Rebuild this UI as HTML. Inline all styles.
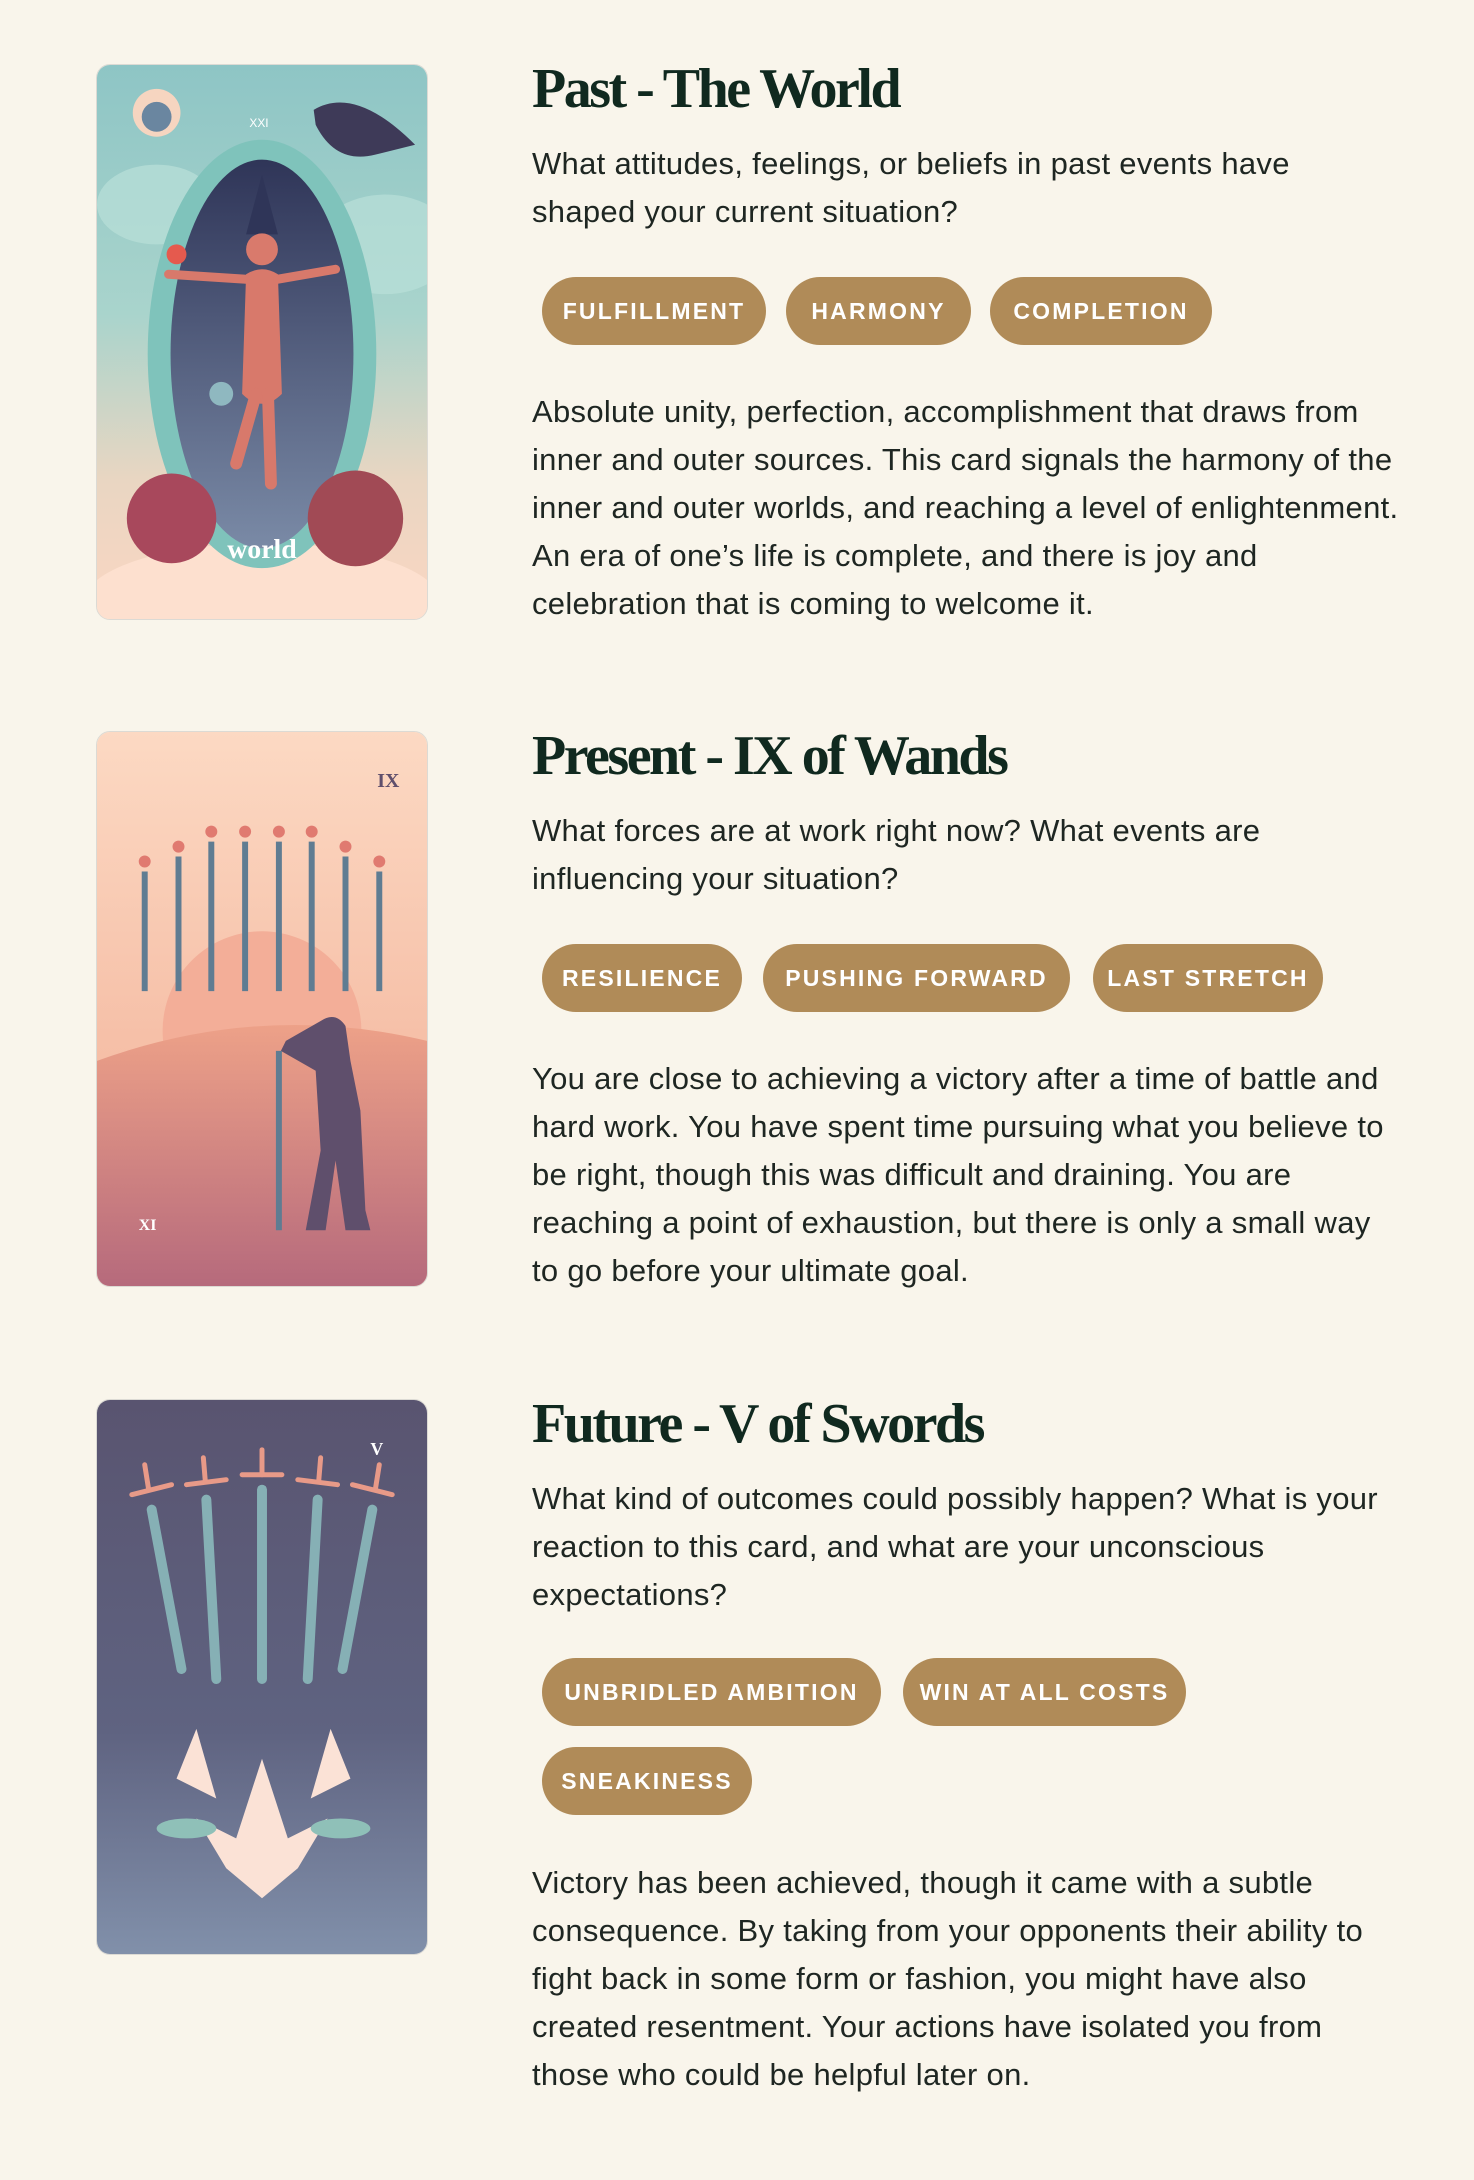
<!DOCTYPE html>
<html><head><meta charset="utf-8"><style>
*{margin:0;padding:0;box-sizing:border-box}
html,body{width:1474px;height:2180px;background:#f9f5eb;overflow:hidden}
body{position:relative;font-family:"Liberation Sans",sans-serif;color:#1e2622}
.card{position:absolute;left:96px;width:332px;height:556px;border-radius:14px;border:1.5px solid #dcdad4;overflow:hidden}
.card svg{display:block;width:100%;height:100%}
.t{position:absolute;left:532px;font-family:"Liberation Serif",serif;font-weight:bold;font-size:56px;line-height:64px;letter-spacing:-2.5px;color:#10291f;white-space:nowrap}
.p{position:absolute;left:532px;font-size:31px;letter-spacing:.3px;line-height:48px;white-space:nowrap;color:#1e2622}
.pill{position:absolute;height:68px;border-radius:34px;background:#b08b58;color:#fff;font-weight:bold;font-size:23px;letter-spacing:2.2px;display:flex;align-items:center;justify-content:center}
</style></head><body>

<!-- Section 1 -->
<div class="card" style="top:64px">
<svg viewBox="0 0 332 556" preserveAspectRatio="none">
<defs><linearGradient id="g1" x1="0" y1="0" x2="0" y2="1"><stop offset="0" stop-color="#8ec5c5"/><stop offset=".45" stop-color="#a9d4cc"/><stop offset=".75" stop-color="#e9d6c2"/><stop offset="1" stop-color="#fbd6c2"/></linearGradient>
<linearGradient id="g1b" x1="0" y1="0" x2="0" y2="1"><stop offset="0" stop-color="#2f3558"/><stop offset="1" stop-color="#7a8aa6"/></linearGradient></defs>
<rect width="332" height="556" fill="url(#g1)"/>
<ellipse cx="60" cy="140" rx="60" ry="40" fill="#b9dfd8" opacity=".7"/>
<ellipse cx="290" cy="180" rx="70" ry="50" fill="#b9dfd8" opacity=".7"/>
<ellipse cx="166" cy="540" rx="180" ry="60" fill="#fde0cf"/>
<ellipse cx="166" cy="290" rx="115" ry="215" fill="#7fc3bb"/>
<ellipse cx="166" cy="290" rx="92" ry="195" fill="url(#g1b)"/>
<path d="M166 110 L150 170 L182 170Z" fill="#2f3558"/>
<circle cx="166" cy="185" r="16" fill="#d97a6c"/>
<path d="M150 210 Q166 200 182 210 L186 330 Q166 350 146 330Z" fill="#d8796b"/>
<path d="M150 215 L72 210 M182 215 L240 205" stroke="#d8796b" stroke-width="9" stroke-linecap="round"/>
<path d="M160 330 L140 400 M172 330 L175 420" stroke="#d8796b" stroke-width="12" stroke-linecap="round"/>
<circle cx="80" cy="190" r="10" fill="#e55a4e"/>
<circle cx="125" cy="330" r="12" fill="#8fb8c0"/>
<circle cx="60" cy="48" r="24" fill="#f6d5c0"/><circle cx="60" cy="52" r="15" fill="#6a86a0"/>
<path d="M218 45 Q260 20 320 80 L280 90 Q240 100 220 60Z" fill="#3e3a58"/>
<ellipse cx="75" cy="455" rx="45" ry="45" fill="#a8485c"/>
<ellipse cx="260" cy="455" rx="48" ry="48" fill="#a14a55"/>
<text x="166" y="495" text-anchor="middle" fill="#fff" font-family="Liberation Serif,serif" font-size="28" font-weight="bold">world</text>
<text x="163" y="62" text-anchor="middle" fill="#fff" font-family="Liberation Sans,sans-serif" font-size="12">XXI</text>
</svg></div>
<div class="t" style="top:57px">Past - The World</div>
<div class="p" style="top:140px">What attitudes, feelings, or beliefs in past events have<br>shaped your current situation?</div>
<div class="pill" style="top:277px;left:542px;width:224px">FULFILLMENT</div>
<div class="pill" style="top:277px;left:786px;width:185px">HARMONY</div>
<div class="pill" style="top:277px;left:990px;width:222px">COMPLETION</div>
<div class="p" style="top:388px">Absolute unity, perfection, accomplishment that draws from<br>inner and outer sources. This card signals the harmony of the<br>inner and outer worlds, and reaching a level of enlightenment.<br>An era of one’s life is complete, and there is joy and<br>celebration that is coming to welcome it.</div>

<!-- Section 2 -->
<div class="card" style="top:731px">
<svg viewBox="0 0 332 556" preserveAspectRatio="none">
<defs><linearGradient id="g2" x1="0" y1="0" x2="0" y2="1"><stop offset="0" stop-color="#fcd9c3"/><stop offset=".55" stop-color="#f6c0a8"/><stop offset="1" stop-color="#f3b59c"/></linearGradient>
<linearGradient id="g2b" x1="0" y1="0" x2="0" y2="1"><stop offset="0" stop-color="#eda188"/><stop offset="1" stop-color="#b66a7c"/></linearGradient></defs>
<rect width="332" height="556" fill="url(#g2)"/>
<circle cx="166" cy="300" r="100" fill="#f3ae98"/>
<path d="M0 330 Q166 270 332 310 L332 556 L0 556Z" fill="url(#g2b)"/>
<g stroke="#5f7c92" stroke-width="6">
<line x1="48" y1="140" x2="48" y2="260"/><line x1="82" y1="125" x2="82" y2="260"/><line x1="115" y1="110" x2="115" y2="260"/><line x1="149" y1="110" x2="149" y2="260"/><line x1="183" y1="110" x2="183" y2="260"/><line x1="216" y1="110" x2="216" y2="260"/><line x1="250" y1="125" x2="250" y2="260"/><line x1="284" y1="140" x2="284" y2="260"/></g>
<g fill="#e07a70"><circle cx="48" cy="130" r="6"/><circle cx="82" cy="115" r="6"/><circle cx="115" cy="100" r="6"/><circle cx="149" cy="100" r="6"/><circle cx="183" cy="100" r="6"/><circle cx="216" cy="100" r="6"/><circle cx="250" cy="115" r="6"/><circle cx="284" cy="130" r="6"/></g>
<path d="M225 290 Q240 280 250 295 L255 330 L265 380 L270 480 L275 500 L250 500 L240 430 L230 500 L210 500 L225 420 L220 340 L185 320 L190 310Z" fill="#5f4f6c"/>
<line x1="183" y1="320" x2="183" y2="500" stroke="#5f7c92" stroke-width="6"/>
<text x="282" y="55" fill="#5f4f6c" font-family="Liberation Serif,serif" font-size="20" font-weight="bold">IX</text>
<text x="42" y="500" fill="#fff" font-family="Liberation Serif,serif" font-size="16" font-weight="bold">XI</text>
</svg></div>
<div class="t" style="top:724px">Present - IX of Wands</div>
<div class="p" style="top:807px">What forces are at work right now? What events are<br>influencing your situation?</div>
<div class="pill" style="top:944px;left:542px;width:200px">RESILIENCE</div>
<div class="pill" style="top:944px;left:763px;width:307px">PUSHING FORWARD</div>
<div class="pill" style="top:944px;left:1093px;width:230px">LAST STRETCH</div>
<div class="p" style="top:1055px">You are close to achieving a victory after a time of battle and<br>hard work. You have spent time pursuing what you believe to<br>be right, though this was difficult and draining. You are<br>reaching a point of exhaustion, but there is only a small way<br>to go before your ultimate goal.</div>

<!-- Section 3 -->
<div class="card" style="top:1399px">
<svg viewBox="0 0 332 556" preserveAspectRatio="none">
<defs><linearGradient id="g3" x1="0" y1="0" x2="0" y2="1"><stop offset="0" stop-color="#595470"/><stop offset=".6" stop-color="#5f6381"/><stop offset="1" stop-color="#8190aa"/></linearGradient></defs>
<rect width="332" height="556" fill="url(#g3)"/>
<g stroke="#86b0b5" stroke-width="10" stroke-linecap="round">
<line x1="55" y1="110" x2="85" y2="270"/><line x1="110" y1="100" x2="120" y2="280"/><line x1="166" y1="90" x2="166" y2="280"/><line x1="222" y1="100" x2="212" y2="280"/><line x1="277" y1="110" x2="247" y2="270"/></g>
<g stroke="#e89a88" stroke-width="5" stroke-linecap="round">
<line x1="35" y1="95" x2="75" y2="85"/><line x1="90" y1="85" x2="130" y2="80"/><line x1="146" y1="75" x2="186" y2="75"/><line x1="202" y1="80" x2="242" y2="85"/><line x1="257" y1="85" x2="297" y2="95"/>
<line x1="52" y1="90" x2="48" y2="65"/><line x1="109" y1="82" x2="107" y2="58"/><line x1="166" y1="75" x2="166" y2="50"/><line x1="223" y1="82" x2="225" y2="58"/><line x1="280" y1="90" x2="284" y2="65"/></g>
<path d="M166 360 L140 440 L100 420 L130 470 L166 500 L202 470 L232 420 L192 440Z" fill="#fbe2d6"/>
<path d="M100 330 L80 380 L120 400Z M235 330 L255 380 L215 400Z" fill="#fbe2d6"/>
<ellipse cx="90" cy="430" rx="30" ry="10" fill="#8fc0b8"/><ellipse cx="245" cy="430" rx="30" ry="10" fill="#8fc0b8"/>
<text x="275" y="55" fill="#fff" font-family="Liberation Serif,serif" font-size="18" font-weight="bold">V</text>
</svg></div>
<div class="t" style="top:1392px">Future - V of Swords</div>
<div class="p" style="top:1475px">What kind of outcomes could possibly happen? What is your<br>reaction to this card, and what are your unconscious<br>expectations?</div>
<div class="pill" style="top:1658px;left:542px;width:339px">UNBRIDLED AMBITION</div>
<div class="pill" style="top:1658px;left:903px;width:283px">WIN AT ALL COSTS</div>
<div class="pill" style="top:1747px;left:542px;width:210px">SNEAKINESS</div>
<div class="p" style="top:1859px">Victory has been achieved, though it came with a subtle<br>consequence. By taking from your opponents their ability to<br>fight back in some form or fashion, you might have also<br>created resentment. Your actions have isolated you from<br>those who could be helpful later on.</div>

</body></html>
